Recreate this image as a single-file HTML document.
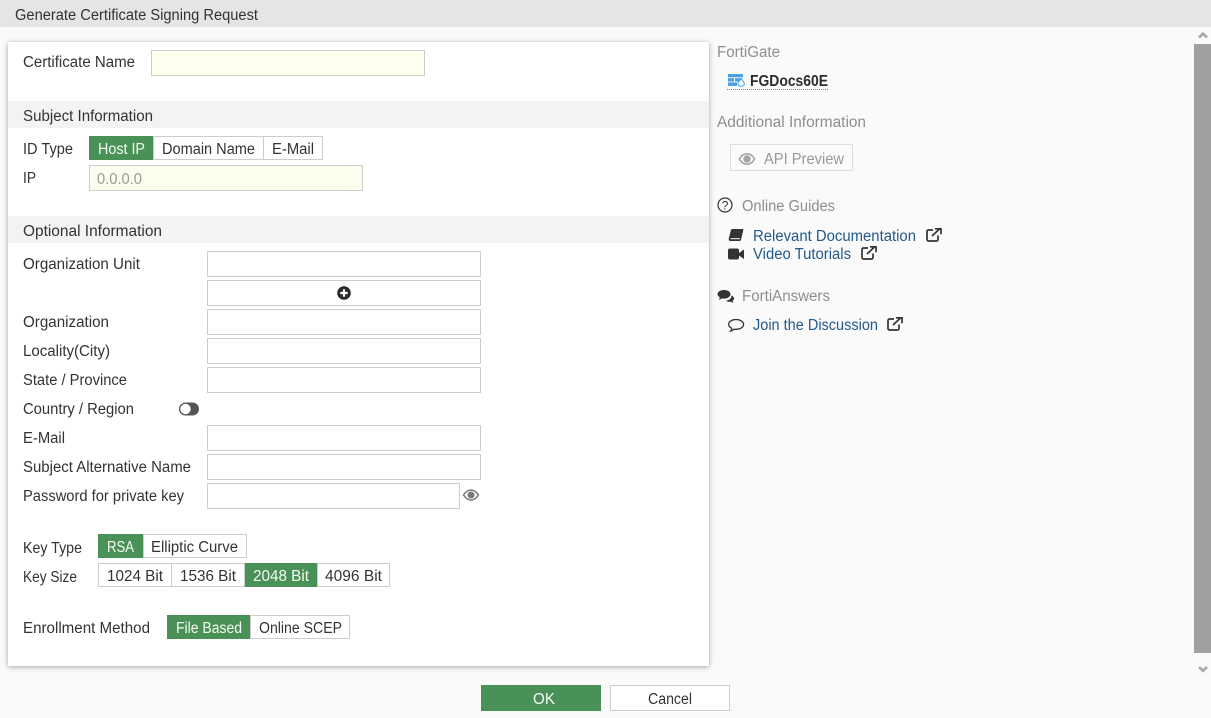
<!DOCTYPE html>
<html><head><meta charset="utf-8"><style>
html,body{margin:0;padding:0;width:1211px;height:718px;overflow:hidden;background:#fafafa}
.a{position:absolute;box-sizing:border-box}
.i{border:1px solid #cdcdcd;background:#fff}
.y{background:#ffffee}
.g{background:#4a9158}
.s{background:#f3f3f3}
svg{position:absolute;left:0;top:0}
text{font-family:"Liberation Sans",sans-serif;font-size:15.5px;fill:#333}
.w{fill:#f4fbf4}
.m{fill:#8e8e8e}
.l{fill:#23598a}
</style></head><body>
<div class="a" style="left:0;top:0;width:1211px;height:27px;background:#e5e5e5"></div>
<div class="a" style="left:8px;top:42px;width:701px;height:624px;background:#fff;box-shadow:0 1px 5px rgba(0,0,0,.35)"></div>
<div class="a i y" style="left:151px;top:50px;width:274px;height:26px"></div>
<div class="a s" style="left:8px;top:101px;width:701px;height:27px"></div>
<div class="a s" style="left:8px;top:216px;width:701px;height:27px"></div>

<div class="a g" style="left:89px;top:136px;width:64px;height:24px"></div>
<div class="a i" style="left:153px;top:136px;width:111px;height:24px"></div>
<div class="a i" style="left:263px;top:136px;width:60px;height:24px"></div>
<div class="a i" style="left:89px;top:165px;width:274px;height:26px;background:#fdfdee"></div>

<div class="a i" style="left:207px;top:251px;width:274px;height:26px"></div>
<div class="a i" style="left:207px;top:280px;width:274px;height:26px"></div>
<div class="a i" style="left:207px;top:309px;width:274px;height:26px"></div>
<div class="a i" style="left:207px;top:338px;width:274px;height:26px"></div>
<div class="a i" style="left:207px;top:367px;width:274px;height:26px"></div>
<div class="a i" style="left:207px;top:425px;width:274px;height:26px"></div>
<div class="a i" style="left:207px;top:454px;width:274px;height:26px"></div>
<div class="a i" style="left:207px;top:483px;width:253px;height:26px"></div>

<div class="a g" style="left:98px;top:534px;width:45px;height:24px"></div>
<div class="a i" style="left:143px;top:534px;width:104px;height:24px"></div>
<div class="a i" style="left:98px;top:563px;width:74px;height:24px"></div>
<div class="a i" style="left:171px;top:563px;width:74px;height:24px"></div>
<div class="a g" style="left:245px;top:563px;width:72px;height:24px"></div>
<div class="a i" style="left:317px;top:563px;width:73px;height:24px"></div>
<div class="a g" style="left:167px;top:615px;width:84px;height:24px"></div>
<div class="a i" style="left:250px;top:615px;width:100px;height:24px"></div>

<div class="a g" style="left:481px;top:685px;width:120px;height:26px"></div>
<div class="a i" style="left:610px;top:685px;width:120px;height:26px"></div>

<div class="a" style="left:730px;top:144px;width:123px;height:27px;border:1px solid #ddd;background:#fbfbfb"></div>
<div class="a" style="left:1194px;top:44px;width:17px;height:609px;background:#a0a0a0"></div>
<div class="a" style="left:727px;top:89px;width:101px;height:0;border-top:1px dotted #888"></div>

<svg width="1211" height="718" viewBox="0 0 1211 718">
<g>
<text x="15" y="20" textLength="243" lengthAdjust="spacingAndGlyphs">Generate Certificate Signing Request</text>
<text x="23" y="67" textLength="112" lengthAdjust="spacingAndGlyphs">Certificate Name</text>
<text x="23" y="121" textLength="130" lengthAdjust="spacingAndGlyphs">Subject Information</text>
<text x="23" y="154" textLength="50" lengthAdjust="spacingAndGlyphs">ID Type</text>
<text x="98" y="154" class="w" textLength="47" lengthAdjust="spacingAndGlyphs">Host IP</text>
<text x="162" y="154" textLength="93" lengthAdjust="spacingAndGlyphs">Domain Name</text>
<text x="272" y="154" textLength="42" lengthAdjust="spacingAndGlyphs">E-Mail</text>
<text x="23" y="183" textLength="13" lengthAdjust="spacingAndGlyphs">IP</text>
<text x="97" y="184" textLength="45" lengthAdjust="spacingAndGlyphs" style="fill:#999">0.0.0.0</text>
<text x="23" y="236" textLength="139" lengthAdjust="spacingAndGlyphs">Optional Information</text>
<text x="23" y="269" textLength="117" lengthAdjust="spacingAndGlyphs">Organization Unit</text>
<text x="23" y="327" textLength="86" lengthAdjust="spacingAndGlyphs">Organization</text>
<text x="23" y="356" textLength="87" lengthAdjust="spacingAndGlyphs">Locality(City)</text>
<text x="23" y="385" textLength="104" lengthAdjust="spacingAndGlyphs">State / Province</text>
<text x="23" y="414" textLength="111" lengthAdjust="spacingAndGlyphs">Country / Region</text>
<text x="23" y="443" textLength="42" lengthAdjust="spacingAndGlyphs">E-Mail</text>
<text x="23" y="472" textLength="168" lengthAdjust="spacingAndGlyphs">Subject Alternative Name</text>
<text x="23" y="501" textLength="161" lengthAdjust="spacingAndGlyphs">Password for private key</text>
<text x="23" y="553" textLength="59" lengthAdjust="spacingAndGlyphs">Key Type</text>
<text x="107" y="552" class="w" textLength="27" lengthAdjust="spacingAndGlyphs">RSA</text>
<text x="151" y="552" textLength="87" lengthAdjust="spacingAndGlyphs">Elliptic Curve</text>
<text x="23" y="582" textLength="54" lengthAdjust="spacingAndGlyphs">Key Size</text>
<text x="107" y="581" textLength="56" lengthAdjust="spacingAndGlyphs">1024 Bit</text>
<text x="180" y="581" textLength="56" lengthAdjust="spacingAndGlyphs">1536 Bit</text>
<text x="253" y="581" class="w" textLength="56" lengthAdjust="spacingAndGlyphs">2048 Bit</text>
<text x="325" y="581" textLength="57" lengthAdjust="spacingAndGlyphs">4096 Bit</text>
<text x="23" y="633" textLength="127" lengthAdjust="spacingAndGlyphs">Enrollment Method</text>
<text x="176" y="633" class="w" textLength="66" lengthAdjust="spacingAndGlyphs">File Based</text>
<text x="259" y="633" textLength="83" lengthAdjust="spacingAndGlyphs">Online SCEP</text>
<text x="533" y="704" class="w" textLength="22" lengthAdjust="spacingAndGlyphs">OK</text>
<text x="648" y="704" textLength="44" lengthAdjust="spacingAndGlyphs">Cancel</text>

<text x="717" y="57" class="m" textLength="63" lengthAdjust="spacingAndGlyphs">FortiGate</text>
<text x="750" y="86" textLength="78" lengthAdjust="spacingAndGlyphs" style="font-weight:bold;fill:#2c2c2c">FGDocs60E</text>
<text x="717" y="127" class="m" textLength="149" lengthAdjust="spacingAndGlyphs">Additional Information</text>
<text x="764" y="164" textLength="80" lengthAdjust="spacingAndGlyphs" style="fill:#999">API Preview</text>
<text x="742" y="211" class="m" textLength="93" lengthAdjust="spacingAndGlyphs">Online Guides</text>
<text x="753" y="241" class="l" textLength="163" lengthAdjust="spacingAndGlyphs">Relevant Documentation</text>
<text x="753" y="259" class="l" textLength="98" lengthAdjust="spacingAndGlyphs">Video Tutorials</text>
<text x="742" y="301" class="m" textLength="88" lengthAdjust="spacingAndGlyphs">FortiAnswers</text>
<text x="753" y="330" class="l" textLength="125" lengthAdjust="spacingAndGlyphs">Join the Discussion</text>
</g>

<!-- plus circle -->
<circle cx="344" cy="293" r="6.8" fill="#2a2a2a"/>
<path d="M344 289.300v7.400M340.300 293h7.400" stroke="#fff" stroke-width="2.200"/>
<!-- toggle -->
<rect x="179" y="402.500" width="20" height="13" rx="6.500" fill="#555"/>
<circle cx="185.500" cy="409" r="5.200" fill="#fff"/>
<!-- eye password -->
<g transform="translate(471 495)">
<path d="M-7.500 0C-5 -3.800 -2.500 -5 0 -5S5 -3.800 7.500 0C5 3.800 2.500 5 0 5S-5 3.800 -7.500 0Z" fill="none" stroke="#777" stroke-width="1.500"/>
<circle r="3.500" fill="#777"/>
</g>
<!-- eye API -->
<g transform="translate(747 159)">
<path d="M-7.500 0C-5.500 -4 -2.500 -5.200 0 -5.200S5.500 -4 7.500 0C5.500 4 2.500 5.200 0 5.200S-5.500 4 -7.500 0Z" fill="none" stroke="#a5a5a5" stroke-width="1.700"/>
<circle r="3.700" fill="#a5a5a5"/>
</g>
<!-- firewall icon -->
<g fill="#4a9fe0">
<rect x="728" y="74" width="15" height="3.300"/>
<rect x="728" y="78.200" width="6" height="3.300"/><rect x="735" y="78.200" width="7" height="3.300"/>
<rect x="728" y="82.400" width="9" height="3.600"/>
</g>
<path d="M741 78.500c1.800 2 3.300 3.700 3.300 5.400 0 1.300-1.100 2.400-3 2.400s-3.300-1.100-3.300-2.700c0-1.600 2.300-2.700 3-5.100z" fill="#fff" stroke="#4a9fe0" stroke-width="1"/>
<!-- question -->
<circle cx="725" cy="205" r="7" fill="none" stroke="#333" stroke-width="1.200"/>
<text x="721.800" y="209.500" style="font-size:12px;fill:#333">?</text>
<!-- book -->
<path d="M732 229h10.500c.7 0 1 .6.800 1.300l-2.300 9.500c-.2.700-.7 1.200-1.500 1.200h-9c-1.500 0-2-1.200-1.700-2.500l2-8c.2-.9.700-1.500 1.700-1.500z" fill="#333"/>
<path d="M730.500 238.700h9.300" stroke="#fff" stroke-width="1"/>
<!-- video -->
<rect x="728" y="248.500" width="11" height="11" rx="2" fill="#333"/>
<path d="M739 253l5-3.500v9.500l-5-3.500z" fill="#333"/>
<!-- comments -->
<path d="M724 290c3.800 0 6.500 1.900 6.500 4.300s-2.700 4.300-6.500 4.300c-.8 0-1.500-.1-2.200-.2-1 .8-2 1.100-3.300 1.200.8-.7 1.200-1.500 1.300-2.300-1.400-.8-2.300-1.900-2.300-3 0-2.400 2.700-4.300 6.500-4.300z" fill="#333"/>
<path d="M731.500 295.500c1.500.6 2.500 1.700 2.500 3 0 1-.6 1.800-1.500 2.400.1.700.5 1.300 1 1.800-1 0-2-.4-2.800-1-1.700.3-3.700-.1-5-1 3-.1 5.900-2 5.800-5.200z" fill="#333"/>
<!-- comment outline -->
<path d="M736 319.500c4.200 0 7.600 2.100 7.600 4.900s-3.400 4.900-7.600 4.900c-.6 0-1.200 0-1.800-.1-.9.900-2.200 1.600-3.600 1.800.8-.8 1.200-1.700 1.200-2.700-2-.9-3.100-2.300-3.100-3.900 0-2.800 3.100-4.900 7.300-4.900z" fill="none" stroke="#333" stroke-width="1.300"/>
<!-- external links -->
<g fill="none" stroke="#333" stroke-width="1.700">
<path d="M938 235.500v4a1.500 1.500 0 0 1-1.500 1.500h-8a1.500 1.500 0 0 1-1.500-1.500v-8a1.500 1.500 0 0 1 1.500-1.500h4.500"/>
<path d="M932 236l8-7.500M935 228.800h6v5.400"/>
<path transform="translate(-65 18)" d="M938 235.500v4a1.500 1.500 0 0 1-1.500 1.500h-8a1.500 1.500 0 0 1-1.500-1.500v-8a1.500 1.500 0 0 1 1.500-1.500h4.500"/>
<path transform="translate(-65 18)" d="M932 236l8-7.500M935 228.800h6v5.400"/>
<path transform="translate(-39 89)" d="M938 235.500v4a1.500 1.500 0 0 1-1.500 1.500h-8a1.500 1.500 0 0 1-1.500-1.500v-8a1.500 1.500 0 0 1 1.500-1.500h4.500"/>
<path transform="translate(-39 89)" d="M932 236l8-7.500M935 228.800h6v5.400"/>
</g>
<!-- scroll arrows -->
<path d="M1199 37.500l4-3.800 4 3.800" fill="none" stroke="#a8a8a8" stroke-width="2.700"/>
<path d="M1199 667l4 3.800 4-3.800" fill="none" stroke="#a8a8a8" stroke-width="2.700"/>
</svg>
</body></html>
